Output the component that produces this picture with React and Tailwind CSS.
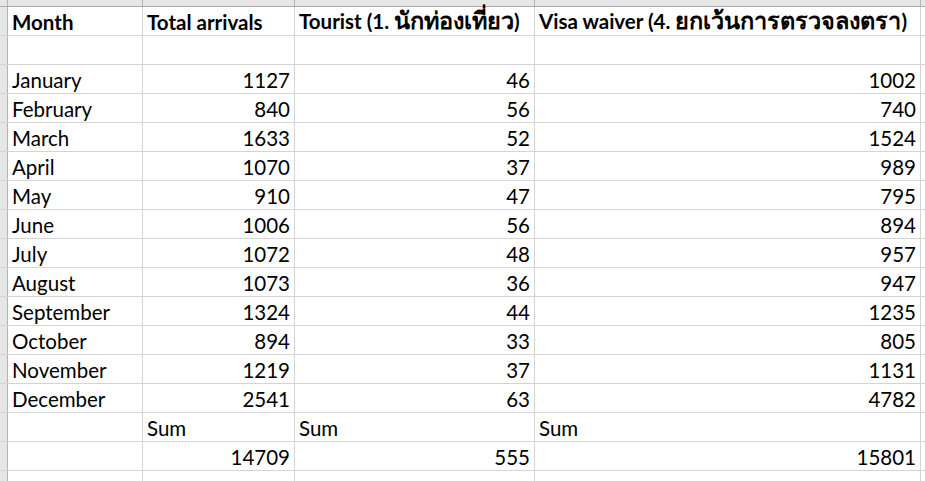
const ROWS = [
  ['January', 1127, 46, 1002],
  ['February', 840, 56, 740],
  ['March', 1633, 52, 1524],
  ['April', 1070, 37, 989],
  ['May', 910, 47, 795],
  ['June', 1006, 56, 894],
  ['July', 1072, 48, 957],
  ['August', 1073, 36, 947],
  ['September', 1324, 44, 1235],
  ['October', 894, 33, 805],
  ['November', 1219, 37, 1131],
  ['December', 2541, 63, 4782],
];

const COLS = ['w-[135px]', 'w-[152px]', 'w-[240px]', 'w-[386px]'];

const Cell = ({ w, right, bold, children }) => (
  <div
    className={`${w} shrink-0 h-full border-r border-[#d4d4d4] flex items-end pb-[3px] px-[4px] whitespace-pre overflow-visible ${
      right ? 'justify-end' : 'justify-start'
    } ${bold ? 'font-bold' : ''}`}
  >
    {children}
  </div>
);

const Row = ({ cells = [], right = [], bold }) => (
  <div className="flex h-[29px] border-b border-[#d4d4d4]">
    <div className="w-[8px] shrink-0 bg-[#e6e6e6] border-r border-[#b4b4b4]" />
    {COLS.map((w, i) => (
      <Cell key={i} w={w} right={right[i]} bold={bold}>
        {cells[i]}
      </Cell>
    ))}
    <div className="flex-1" />
  </div>
);

// Thai glyphs come out narrower than in the sheet, so bump them a little
const Thai = ({ children }) => <span className="text-[23.5px] leading-none font-bold">{children}</span>;

export default function App() {
  return (
    <div
      className="w-[925px] h-[481px] overflow-hidden bg-white text-[20.5px] text-black leading-none"
      style={{ fontFamily: 'Lato, "Noto Sans", sans-serif' }}
    >
      {/* column header strip */}
      <div className="flex h-[7px] bg-[#e6e6e6] border-b border-[#ababab]">
        <div className="w-[8px] shrink-0 border-r border-[#b4b4b4]" />
        {COLS.map((w, i) => (
          <div key={i} className={`${w} shrink-0 border-r border-[#b4b4b4]`} />
        ))}
      </div>

      <Row
        bold
        cells={[
          'Month',
          'Total arrivals',
          <span>Tourist (1.{'\u00a0'}<Thai>นักท่องเที่ยว</Thai>)</span>,
          <span>Visa waiver (4.{'\u00a0'}<Thai>ยกเว้นการตรวจลงตรา</Thai>)</span>,
        ]}
      />
      <Row />
      {ROWS.map(r => (
        <Row key={r[0]} cells={r} right={[false, true, true, true]} />
      ))}
      <Row cells={['', 'Sum', 'Sum', 'Sum']} />
      <Row cells={['', 14709, 555, 15801]} right={[false, true, true, true]} />
      <Row />
    </div>
  );
}
